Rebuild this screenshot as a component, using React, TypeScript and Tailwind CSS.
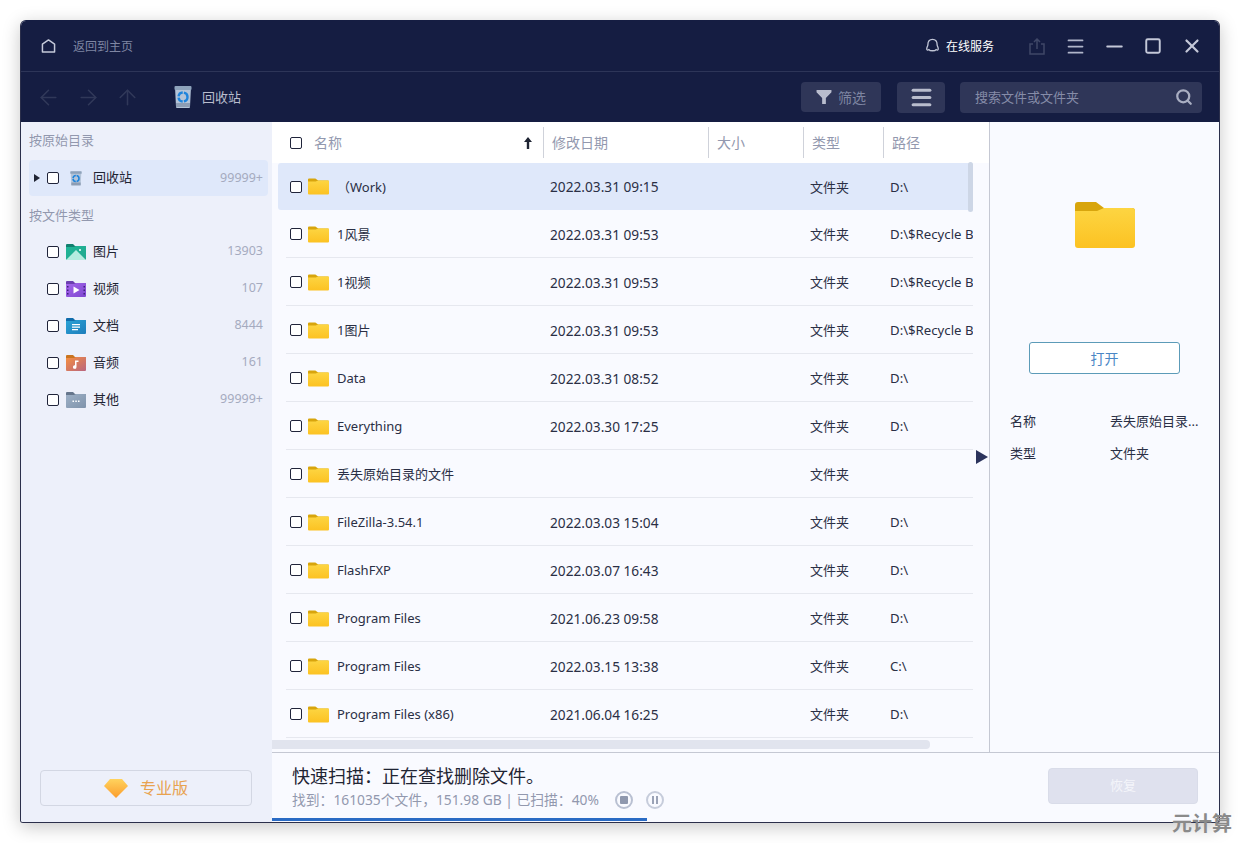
import React from 'react';
import { ArrowLeft, ArrowRight, ArrowUp, Menu, Minus, Search, Square, X } from 'lucide-react';

const rows = [
  { name: '（Work)', date: '2022.03.31 09:15', path: 'D:\\', active: true },
  { name: '1风景', date: '2022.03.31 09:53', path: 'D:\\$Recycle Bin' },
  { name: '1视频', date: '2022.03.31 09:53', path: 'D:\\$Recycle Bin' },
  { name: '1图片', date: '2022.03.31 09:53', path: 'D:\\$Recycle Bin' },
  { name: 'Data', date: '2022.03.31 08:52', path: 'D:\\' },
  { name: 'Everything', date: '2022.03.30 17:25', path: 'D:\\' },
  { name: '丢失原始目录的文件', date: '', path: '' },
  { name: 'FileZilla-3.54.1', date: '2022.03.03 15:04', path: 'D:\\' },
  { name: 'FlashFXP', date: '2022.03.07 16:43', path: 'D:\\' },
  { name: 'Program Files', date: '2021.06.23 09:58', path: 'D:\\' },
  { name: 'Program Files', date: '2022.03.15 13:38', path: 'C:\\' },
  { name: 'Program Files (x86)', date: '2021.06.04 16:25', path: 'D:\\' },
];

function Check() {
  return <span className="block w-3 h-3 shrink-0 rounded-[2px] border border-[#20243a] bg-white" />;
}

function Folder({ className }: { className: string }) {
  return (
    <svg viewBox="0 0 60 46" className={className}>
      <defs>
        <linearGradient id="folderBody" x1="0" y1="0" x2="0" y2="1">
          <stop offset="0" stopColor="#fdd542" />
          <stop offset="1" stopColor="#fcc222" />
        </linearGradient>
      </defs>
      <path d="M0 3a3 3 0 0 1 3-3h18l8 6h28a3 3 0 0 1 3 3v10H0z" fill="#d8a50d" />
      <path d="M0 9h22l7-3h28a3 3 0 0 1 3 3v34a3 3 0 0 1-3 3H3a3 3 0 0 1-3-3z" fill="url(#folderBody)" />
    </svg>
  );
}

function RecycleBin({ className }: { className: string }) {
  return (
    <svg viewBox="0 0 18 22" className={className}>
      <path d="M1 1h16l-1 20a1 1 0 0 1-1 1H3a1 1 0 0 1-1-1z" fill="#b4c4d8" />
      <rect x="0.5" y="0" width="17" height="4" rx="1" fill="#8ea3bb" />
      <rect x="2" y="17" width="14" height="4" fill="#8d9db4" />
      <circle cx="9" cy="11" r="4.5" fill="none" stroke="#1f84dc" strokeWidth="2.4" strokeDasharray="6 1.2" />
    </svg>
  );
}

function TypeIcon({ tab, from, to, kind }: { tab: string; from: string; to: string; kind: string }) {
  const id = 'g' + kind;
  return (
    <svg viewBox="0 0 20 16" className="w-5 h-4 shrink-0">
      <defs>
        <linearGradient id={id} x1="0" y1="0" x2="1" y2="1">
          <stop offset="0" stopColor={from} />
          <stop offset="1" stopColor={to} />
        </linearGradient>
      </defs>
      <path d="M0 1a1 1 0 0 1 1-1h6l2 2h10a1 1 0 0 1 1 1v4H0z" fill={tab} />
      <path d="M0 3h8l2-1h9a1 1 0 0 1 1 1v12a1 1 0 0 1-1 1H1a1 1 0 0 1-1-1z" fill={`url(#${id})`} />
      {kind === 'pic' && <path d="M0 16l10-10 10 10z" fill="#b5ecdf" />}
      {kind === 'pic' && <circle cx="14" cy="6" r="1" fill="#fff" />}
      {kind === 'video' && <path d="M7.5 5.5l6 3.5-6 3.5z" fill="#fff" />}
      {kind === 'video' && <path d="M1 5h1.5v1.5H1zM1 8.5h1.5V10H1zM1 12h1.5v1.5H1zM17.5 5H19v1.5h-1.5zM17.5 8.5H19V10h-1.5zM17.5 12H19v1.5h-1.5z" fill="#3d1f7a" />}
      {kind === 'doc' && <path d="M6 6h8v1.2H6zM6 8.5h8v1.2H6zM6 11h6v1.2H6z" fill="#fff" />}
      {kind === 'music' && <path d="M9 5.5h3.5v1.5H10.500v5a1.800 1.800 0 1 1-1.500-1.700z" fill="#fff" />}
      {kind === 'other' && <path d="M6.500 8.500h1.500V10H6.500zM9.300 8.500h1.500V10H9.300zM12 8.500h1.500V10H12z" fill="#fff" />}
    </svg>
  );
}

const types = [
  { label: '图片', count: '13903', tab: '#11806f', from: '#1fb596', to: '#22a88f', kind: 'pic' },
  { label: '视频', count: '107', tab: '#6c3fb0', from: '#a566ea', to: '#7e48d0', kind: 'video' },
  { label: '文档', count: '8444', tab: '#0f6cab', from: '#2aa3d6', to: '#1d7dbb', kind: 'doc' },
  { label: '音频', count: '161', tab: '#c9741f', from: '#f58f3f', to: '#b9657f', kind: 'music' },
  { label: '其他', count: '99999+', tab: '#66768c', from: '#9db0c6', to: '#7f93ab', kind: 'other' },
];

export default function App() {
  return (
    <div className="relative w-[1240px] h-[843px] bg-white p-[20px] overflow-hidden font-['Noto_Sans','Noto_Sans_CJK_SC',sans-serif]">
      <div className="w-[1200px] h-[803px] flex flex-col rounded-t-[6px] rounded-b-[3px] border border-[#2b2f4b] border-t-[#151d42] bg-[#f9faff] shadow-[0_4px_18px_rgba(0,0,0,0.22)] overflow-hidden">
        <div className="h-[51px] shrink-0 flex items-center bg-[#151d42] border-b border-[#2d3558] pl-[20px] pr-[16px]">
          <svg viewBox="0 0 16 15" className="w-[15px] h-[14px] text-[#c4c9d9]" fill="none" stroke="currentColor" strokeWidth="1.600">
            <path d="M1.500 14V5.500L8 1l6.500 4.500V14z" strokeLinejoin="round" />
          </svg>
          <span className="ml-[17px] pt-[2px] text-[12px] text-[#7f86a3]">返回到主页</span>
          <svg viewBox="0 0 16 18" className="ml-auto w-[15px] h-[16px] text-[#c0c5d6]" fill="none" stroke="currentColor" strokeWidth="1.500">
            <path d="M8 1.500c3.500 0 5.200 2.800 5.200 6 0 1.500 1.300 3 1.300 5 0 1.200-1.200 1.500-2.500.5-1 1.800-7 1.800-8 0-1.300 1-2.500.7-2.500-.5 0-2 1.300-3.500 1.300-5 0-3.200 1.700-6 5.200-6z" strokeLinejoin="round" />
          </svg>
          <span className="ml-[6px] pt-[1px] text-[12px] text-white">在线服务</span>
          <svg viewBox="0 0 16 17" className="ml-[35px] w-[16px] h-[17px] text-[#3f4767]" fill="none" stroke="currentColor" strokeWidth="1.500">
            <path d="M4 6H1v10h14V6h-3M8 11V1M5 4l3-3 3 3" />
          </svg>
          <Menu strokeWidth={2} className="ml-[20px] w-[21px] h-[21px] text-[#b0b5c9]" />
          <Minus strokeWidth={1.800} className="ml-[16px] w-[25px] h-[25px] text-[#c4c8d8]" />
          <Square strokeWidth={2.600} className="ml-[17px] w-[18px] h-[18px] text-[#c4c8d8]" />
          <X strokeWidth={2.400} className="ml-[19px] w-[22px] h-[22px] text-[#c4c8d8]" />
        </div>

        <div className="h-[50px] shrink-0 flex items-center bg-[#151d42] pl-[15px] pr-[17px]">
          <ArrowLeft strokeWidth={1.500} className="w-[25px] h-[25px] text-[#303859]" />
          <ArrowRight strokeWidth={1.500} className="ml-[15px] w-[25px] h-[25px] text-[#303859]" />
          <ArrowUp strokeWidth={1.500} className="ml-[14px] w-[25px] h-[25px] text-[#303859]" />
          <RecycleBin className="ml-[34px] w-[18px] h-[22px]" />
          <span className="ml-[10px] pt-[2px] text-[13px] text-[#b9bdcd]">回收站</span>
          <button className="ml-auto w-[80px] h-[30px] flex items-center justify-center gap-[6px] rounded-[4px] bg-[#2f3658] text-[14px] text-[#7e85a2]">
            <svg viewBox="0 0 16 15" className="w-[16px] h-[14px]" fill="#b9bdcd">
              <path d="M0 0h16v2.500L10 8.500V15H6V8.500L0 2.500z" />
            </svg>
            <span className="pt-[1px]">筛选</span>
          </button>
          <button className="ml-[16px] w-[48px] h-[31px] flex items-center justify-center rounded-[4px] bg-[#2f3658]">
            <Menu strokeWidth={3} className="w-[25px] h-[25px] text-[#b9bdcd]" />
          </button>
          <div className="ml-[15px] w-[242px] h-[31px] flex items-center justify-between pl-[15px] pr-[9px] rounded-[4px] bg-[#2f3658] text-[13px] text-[#868ca8]">
            <span className="pt-[1px]">搜索文件或文件夹</span>
            <Search strokeWidth={3} className="w-[18px] h-[18px] text-[#a9aec2]" />
          </div>
        </div>

        <div className="flex-1 flex min-h-0">
          <aside className="w-[251px] shrink-0 flex flex-col bg-[#edf0fa] pl-[8px] pr-[4px]">
            <div className="h-[38px] flex items-center text-[13px] text-[#9298ae]">按原始目录</div>
            <div className="h-[36px] flex items-center rounded-[4px] bg-[#dfe8fa] pl-[5px] pr-[5px]">
              <span className="w-0 h-0 border-y-[4px] border-y-transparent border-l-[6px] border-l-[#1f2433]" />
              <span className="ml-[7px]"><Check /></span>
              <RecycleBin className="ml-[11px] w-[12px] h-[19px]" />
              <span className="ml-[11px] text-[13px] text-[#1f2433]">回收站</span>
              <span className="ml-auto text-[12.500px] text-[#a5abbf]">99999+</span>
            </div>
            <div className="h-[39px] flex items-center text-[13px] text-[#9298ae]">按文件类型</div>
            <div className="flex flex-col -mt-[2px]">
              {types.map((t) => (
                <div key={t.label} className="h-[37px] flex items-center pl-[18px] pr-[5px]">
                  <Check />
                  <span className="ml-[7px]"><TypeIcon tab={t.tab} from={t.from} to={t.to} kind={t.kind} /></span>
                  <span className="ml-[7px] text-[13px] text-[#1f2433]">{t.label}</span>
                  <span className="ml-auto text-[12.500px] text-[#a5abbf]">{t.count}</span>
                </div>
              ))}
            </div>
            <button className="mt-auto mb-[16px] ml-[11px] w-[212px] h-[36px] flex items-center justify-center gap-[12px] rounded-[4px] border border-[#d3d7e3] text-[16px] text-[#e8a24f]">
              <svg viewBox="0 0 24 20" className="w-[24px] h-[20px]">
                <defs>
                  <linearGradient id="gem" x1="0" y1="0" x2="0" y2="1">
                    <stop offset="0" stopColor="#ffd35e" />
                    <stop offset="1" stopColor="#fb9c2c" />
                  </linearGradient>
                </defs>
                <path d="M6 1h12l6 7-12 12L0 8z" fill="url(#gem)" />
              </svg>
              专业版
            </button>
          </aside>

          <div className="flex-1 flex flex-col min-w-0">
            <div className="relative flex-1 flex min-h-0">
              <section className="relative w-[718px] shrink-0 flex flex-col border-r border-[#c5c8d3] overflow-hidden">
                <div className="h-[41px] shrink-0 flex items-center bg-white text-[14px] text-[#9298ae]">
                  <div className="w-[272px] h-[31px] flex items-center border-r border-[#cfd2da] pl-[18px] pr-[11px]">
                    <Check />
                    <span className="ml-[12px]">名称</span>
                    <svg viewBox="0 0 8 12" className="ml-auto w-[8px] h-[12px]" fill="#1f2433">
                      <path d="M4 0l4 5H5.200v7H2.800V5H0z" />
                    </svg>
                  </div>
                  <div className="w-[165px] h-[31px] flex items-center border-r border-[#cfd2da] pl-[8px]">修改日期</div>
                  <div className="w-[95px] h-[31px] flex items-center border-r border-[#cfd2da] pl-[8px]">大小</div>
                  <div className="w-[80px] h-[31px] flex items-center border-r border-[#cfd2da] pl-[8px]">类型</div>
                  <div className="pl-[8px]">路径</div>
                </div>
                <div className="flex-1 min-h-0 overflow-hidden">
                  {rows.map((r, i) => (
                    <div key={i} className={r.active ? 'ml-[6px] w-[695px] h-[47px] mb-[1px] pl-[8px] rounded-[3px] bg-[#dfe8fa]' : 'ml-[6px] w-[695px] h-[48px] pl-[8px]'}>
                      <div className={r.active ? 'h-[47px] flex items-center pl-[4px] text-[#2a2f45]' : 'h-[47px] flex items-center pl-[4px] border-b border-[#e6e8ef] text-[#2a2f45]'}>
                        <Check />
                        <Folder className="ml-[6px] w-[21px] h-[17px] shrink-0" />
                        <span className="ml-[8px] pt-[2px] w-[213px] shrink-0 whitespace-nowrap text-[13px]">{r.name}</span>
                        <span className="pt-[2px] w-[260px] shrink-0 text-[13.700px]">{r.date}</span>
                        <span className="pt-[2px] w-[80px] shrink-0 text-[13px]">文件夹</span>
                        <span className="pt-[2px] flex-1 min-w-0 whitespace-nowrap overflow-hidden text-[13.200px]">{r.path}</span>
                      </div>
                    </div>
                  ))}
                </div>
                <div className="absolute left-[696px] top-[40px] w-[5px] h-[50px] rounded-[3px] bg-[#cdd6e6]" />
                <div className="absolute left-0 bottom-[3px] w-[658px] h-[9px] rounded-r-[4px] bg-[#e1e4ee]" />
              </section>
              <section className="flex-1 flex flex-col">
                <Folder className="mt-[80px] ml-[85px] w-[60px] h-[46px]" />
                <button className="mt-[94px] ml-[39px] w-[151px] h-[32px] rounded-[3px] border border-[#5c9bb8] bg-white text-[14px] text-[#4a86c5]">打开</button>
                <div className="mt-[38px] pl-[20px] pr-[20px] flex text-[13px] text-[#2a2f45]">
                  <span className="w-[100px]">名称</span>
                  <span className="whitespace-nowrap">丢失原始目录...</span>
                </div>
                <div className="mt-[12px] pl-[20px] flex text-[13px] text-[#2a2f45]">
                  <span className="w-[100px]">类型</span>
                  <span>文件夹</span>
                </div>
              </section>
              <span className="absolute left-[704px] top-[328px] w-0 h-0 border-y-[7px] border-y-transparent border-l-[12px] border-l-[#2b335c]" />
            </div>

            <footer className="relative h-[70px] shrink-0 flex items-center border-t border-[#c5c8d3] pl-[20px] pr-[21px]">
              <div className="mt-[1px]">
                <div className="text-[18px] leading-[24px] text-[#1f2433]">快速扫描：正在查找删除文件。</div>
                <div className="flex items-center text-[13.800px] leading-[24px] text-[#9298ae]">
                  <span>找到：161035个文件，151.98 GB | 已扫描：40%</span>
                  <span className="ml-[16px] w-[18px] h-[18px] flex items-center justify-center rounded-full border-2 border-[#b9c0d2]">
                    <span className="w-[8px] h-[8px] rounded-[1px] bg-[#8f98ae]" />
                  </span>
                  <span className="ml-[13px] w-[18px] h-[18px] flex items-center justify-center gap-[2px] rounded-full border-2 border-[#c6ccdb]">
                    <span className="w-[2px] h-[8px] bg-[#9aa2b6]" />
                    <span className="w-[2px] h-[8px] bg-[#9aa2b6]" />
                  </span>
                </div>
              </div>
              <button className="ml-auto w-[150px] h-[36px] -mt-[4px] pt-[1px] rounded-[4px] bg-[#dfe1ee] border border-[#d9dce9] text-[13px] text-[#f4f5fa]">恢复</button>
              <div className="absolute left-0 bottom-[1px] w-[375px] h-[3px] bg-[#2a6bc4]" />
            </footer>
          </div>
        </div>
      </div>
      <span className="absolute left-[1172px] top-[811px] text-[20px] leading-[26px] font-bold text-[#8a8a8a]">元计算</span>
    </div>
  );
}
